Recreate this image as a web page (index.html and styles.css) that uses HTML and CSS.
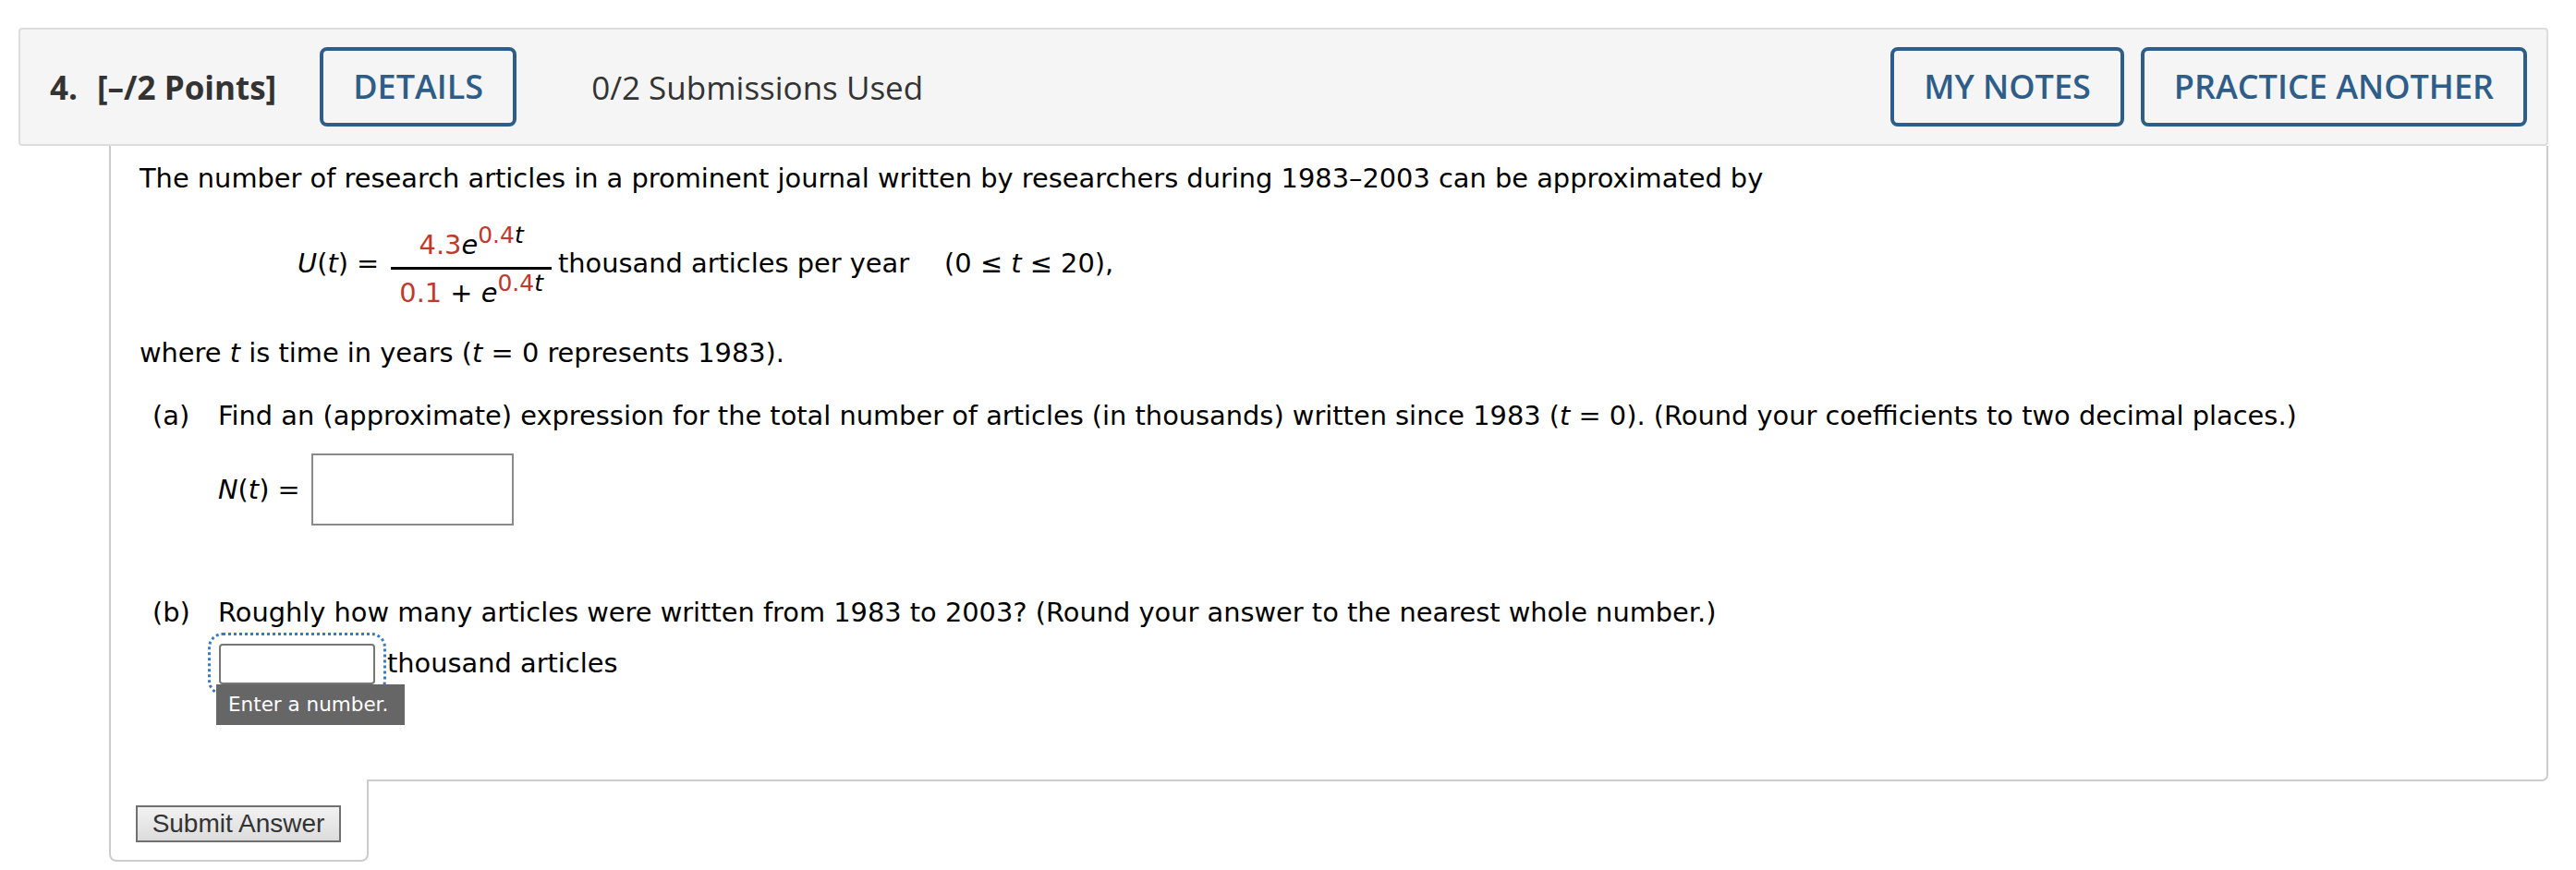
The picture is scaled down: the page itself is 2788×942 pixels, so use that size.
FILE: index.html
```html
<!DOCTYPE html>
<html lang="en">
<head>
<meta charset="utf-8">
<title>Question 4</title>
<link rel="stylesheet" href="styles.css">
</head>
<body>
<div class="question">
  <div class="qhead">
    <span class="qnum">4.</span>
    <span class="qpoints">[–/2 Points]</span>
    <button class="hbtn details" type="button">DETAILS</button>
    <span class="subs">0/2 Submissions Used</span>
    <div class="hright">
      <button class="hbtn" type="button">MY NOTES</button>
      <button class="hbtn" type="button">PRACTICE ANOTHER</button>
    </div>
  </div>
  <div class="qbody">
    <p class="line first">The number of research articles in a prominent journal written by researchers during 1983–2003 can be approximated by</p>
    <div class="eq">
      <span class="eqlhs"><i>U</i>(<i>t</i>) =</span>
      <span class="frac">
        <span class="num"><span class="red">4.3</span><i>e</i><sup><span class="red">0.4</span><i>t</i></sup></span>
        <span class="den"><span class="red">0.1</span> + <i>e</i><sup><span class="red">0.4</span><i>t</i></sup></span>
      </span>
      <span class="eqtext">thousand articles per year</span>
      <span class="eqtext eqdom">(0 ≤ <i>t</i> ≤ 20),</span>
    </div>
    <p class="line where">where <i>t</i> is time in years (<i>t</i> = 0 represents 1983).</p>
    <div class="part part-a">
      <span class="plabel">(a)</span>
      <div class="pbody">
        <p class="line">Find an (approximate) expression for the total number of articles (in thousands) written since 1983 (<i>t</i> = 0). (Round your coefficients to two decimal places.)</p>
        <div class="nrow">
          <span class="nlabel"><i>N</i>(<i>t</i>) =</span>
          <input class="ans-big" type="text" aria-label="N(t)">
        </div>
      </div>
    </div>
    <div class="part part-b">
      <span class="plabel">(b)</span>
      <div class="pbody">
        <p class="line">Roughly how many articles were written from 1983 to 2003? (Round your answer to the nearest whole number.)</p>
        <div class="brow">
          <span class="focuswrap">
            <input class="ans-small" type="text" aria-label="thousand articles">
            <span class="tip">Enter a number.</span>
          </span>
          <span class="unit">thousand articles</span>
        </div>
      </div>
    </div>
  </div>
  <div class="submit-tab">
    <button class="submit" type="button">Submit Answer</button>
  </div>
</div>
</body>
</html>
```
FILE: styles.css
```css
html, body {
  margin: 0;
  padding: 0;
  background: #ffffff;
}

.question {
  padding-top: 30px;
}

/* ---------- header ---------- */
.qhead {
  margin: 0 30px 0 20px;
  height: 128px;
  box-sizing: border-box;
  border: 2px solid #dddddd;
  border-radius: 4px;
  background: #f5f5f5;
  display: flex;
  align-items: center;
  padding: 0 21px 0 32px;
  font-family: "Open Sans", "Liberation Sans", sans-serif;
  font-size: 35px;
  color: #333333;
}

.qnum {
  font-weight: 700;
  margin-right: 21px;
}

.qpoints {
  font-weight: 700;
}

.hbtn {
  height: 86px;
  box-sizing: border-box;
  border: 4px solid #2f5d8a;
  border-radius: 8px;
  background: transparent;
  color: #2f5d8a;
  font-family: "Open Sans", "Liberation Sans", sans-serif;
  font-weight: 600;
  font-size: 36px;
  padding: 0 32px;
  margin: 0;
  line-height: 1;
}

.details {
  margin-left: 47px;
}

.subs {
  margin-left: 81px;
  font-weight: 400;
}

.hright {
  margin-left: auto;
  display: flex;
  gap: 18px;
}

/* ---------- body ---------- */
.qbody {
  margin: 0 30px 0 118px;
  border: 2px solid #cccccc;
  border-top: none;
  border-bottom-right-radius: 7px;
  padding: 15px 20px 103px 31px;
  font-family: "DejaVu Sans", Verdana, sans-serif;
  font-size: 28.85px;
  line-height: 40px;
  color: #000000;
}

.line {
  margin: 0;
  white-space: nowrap;
}

i {
  font-style: italic;
}

.red {
  color: #c0392b;
}

/* equation */
.eq {
  display: flex;
  align-items: center;
  margin: 34px 0 0 171px;
  white-space: nowrap;
}

.eqlhs,
.eqtext {
  margin-bottom: 12px;
}

.frac {
  display: flex;
  flex-direction: column;
  align-items: stretch;
  margin-left: 13px;
}

.num {
  line-height: 36px;
  padding: 0 9px 6px;
  text-align: center;
}

.den {
  line-height: 36px;
  border-top: 3px solid #000000;
  padding: 7px 9px 0;
  text-align: center;
}

sup {
  font-size: 25px;
  line-height: 0;
  vertical-align: 12px;
}

.eqtext {
  margin-left: 7px;
}

.eqdom {
  margin-left: 38px;
}

.where {
  margin-top: 27px;
}

/* parts */
.part {
  display: grid;
  grid-template-columns: 71px 1fr;
  padding-left: 14px;
}

.part-a {
  margin-top: 28px;
}

.part-b {
  margin-top: 74px;
}

.plabel {
  line-height: 40px;
}

.nrow {
  display: flex;
  align-items: center;
  margin-top: 21px;
}

.nlabel {
  margin-right: 12px;
}

.ans-big {
  width: 219px;
  height: 78px;
  box-sizing: border-box;
  border: 2px solid #8a8a8a;
  border-radius: 0;
  padding: 0;
  margin: 0;
  background: #ffffff;
}

.brow {
  display: flex;
  align-items: center;
  margin-top: 14px;
  height: 44px;
}

.focuswrap {
  position: relative;
  display: block;
  height: 44px;
  margin-left: 1px;
}

.ans-small {
  display: block;
  width: 169px;
  height: 44px;
  box-sizing: border-box;
  border: 2px solid #767676;
  border-radius: 4px;
  padding: 0;
  margin: 0;
  background: #ffffff;
  outline: 3px dotted #3a78c8;
  outline-offset: 9px;
}

.tip {
  position: absolute;
  left: -3px;
  top: 44px;
  width: 204px;
  height: 44px;
  box-sizing: border-box;
  background: #666666;
  color: #ffffff;
  font-family: "DejaVu Sans", Verdana, sans-serif;
  font-size: 21.5px;
  line-height: 44px;
  padding-left: 13px;
  white-space: nowrap;
}

.unit {
  margin-left: 13px;
  margin-bottom: 2px;
}

/* submit tab */
.submit-tab {
  width: 281px;
  box-sizing: border-box;
  margin: -2px 0 0 118px;
  position: relative;
  background: #ffffff;
  border: 2px solid #cccccc;
  border-top: none;
  border-radius: 0 0 8px 8px;
  padding: 28px 28px 19px 27px;
}

.submit {
  display: block;
  width: 222px;
  height: 40px;
  box-sizing: border-box;
  border: 2px solid #707070;
  background: linear-gradient(#f2f2f2, #dcdcdc);
  color: #333333;
  font-family: "Liberation Sans", Arial, sans-serif;
  font-size: 28px;
  line-height: 1;
  padding: 0 14px;
  margin: 0;
  white-space: nowrap;
}
```
